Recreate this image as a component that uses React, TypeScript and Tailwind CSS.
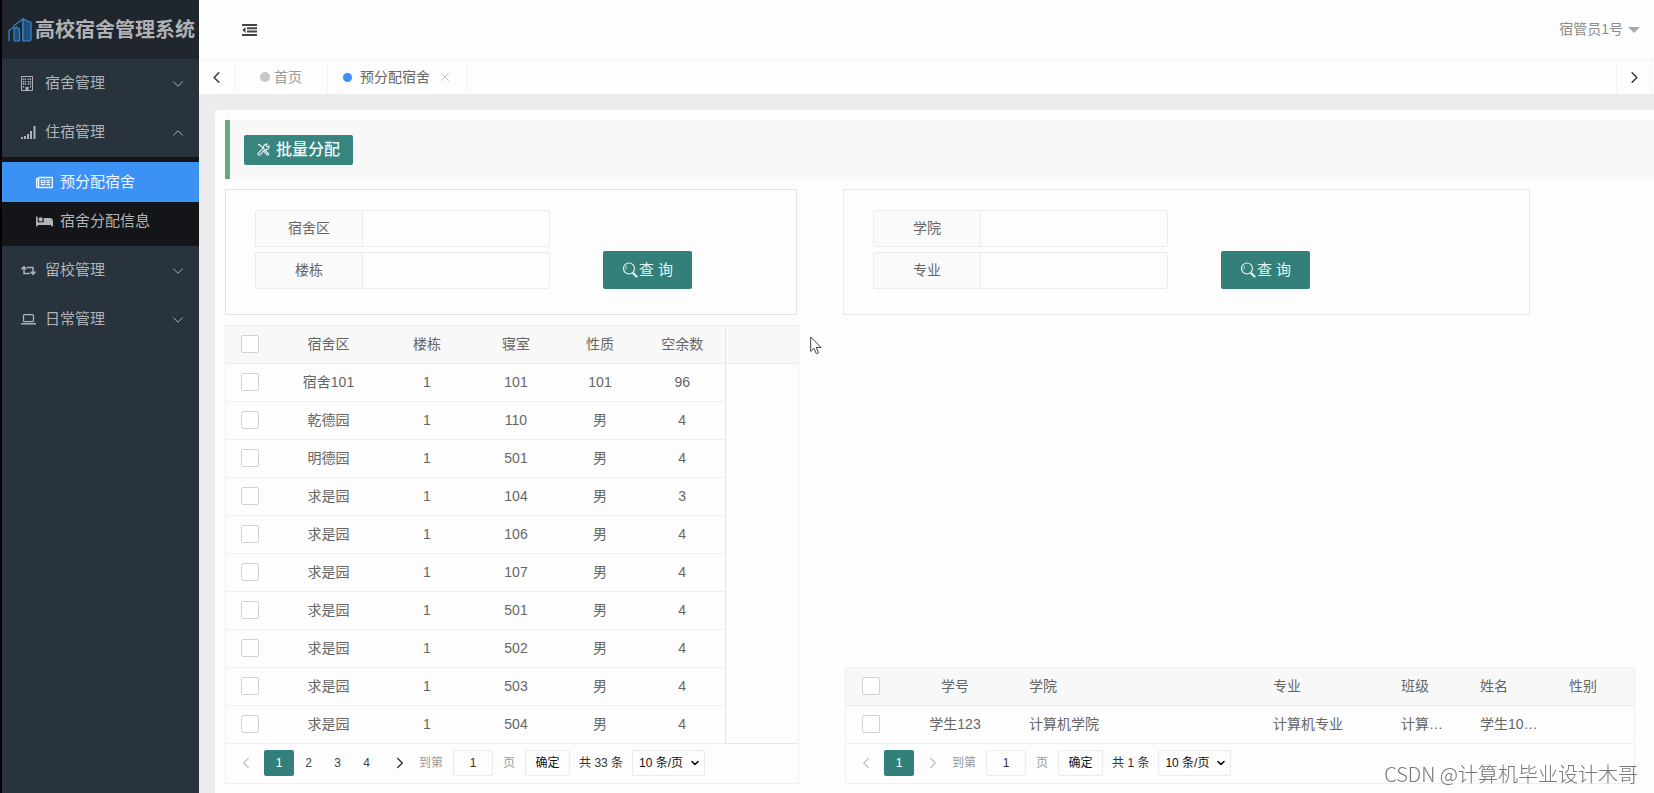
import { useState } from "react";
import { FaBed, FaRegNewspaper, FaRetweet } from "react-icons/fa";
import { ChevronDown, ChevronLeft, ChevronRight, ChevronUp, X } from "lucide-react";

type Room = [area: string, building: string, room: string, kind: string, free: string];

const rooms: Room[] = [
  ["宿舍101", "1", "101", "101", "96"],
  ["乾德园", "1", "110", "男", "4"],
  ["明德园", "1", "501", "男", "4"],
  ["求是园", "1", "104", "男", "3"],
  ["求是园", "1", "106", "男", "4"],
  ["求是园", "1", "107", "男", "4"],
  ["求是园", "1", "501", "男", "4"],
  ["求是园", "1", "502", "男", "4"],
  ["求是园", "1", "503", "男", "4"],
  ["求是园", "1", "504", "男", "4"],
];

const roomColumns = ["宿舍区", "楼栋", "寝室", "性质", "空余数"];
const studentColumns = ["学院", "专业", "班级", "姓名", "性别"];

function Logo() {
  return (
    <svg viewBox="0 0 24 24" className="h-6 w-6 shrink-0" fill="none" stroke="#3d85c6" strokeWidth="1.2">
      <path d="M1 23V12.500l5-3.500" />
      <path d="M6 23V11l2.500-2 3 2v12z" fill="#1f4f80" />
      <path d="M6 9.500V7.500l9-6.500v22" />
      <path d="M15 1l8 3.500V22l-1.500 1H15z" fill="#1f4f80" />
    </svg>
  );
}

function BuildingIcon() {
  return (
    <svg viewBox="0 0 12 15" className="h-[15px] w-3">
      <path d="M.5.5h11v14H.5z" fill="none" stroke="currentColor" />
      <path
        d="M2.500 2.500v7M4.500 2.500v7M7.500 2.500v7M9.500 2.500v7M2.500 10v2.500M9.500 10v2.500"
        stroke="currentColor"
        strokeWidth="1.300"
        strokeDasharray="1.500 0.900"
      />
      <path d="M4.500 11h3v3.500h-3z" fill="currentColor" />
    </svg>
  );
}

function SignalIcon() {
  return (
    <svg viewBox="0 0 15 13" className="h-[13px] w-[15px]" fill="currentColor">
      <path d="M0 11h2v2H0zM3 10h2v3H3zM6 8h2v5H6zM9 5h2v8H9zM12.500 0h2v13h-2z" />
    </svg>
  );
}

function LaptopIcon() {
  return (
    <svg viewBox="0 0 15 11" className="h-[11px] w-[15px]" fill="none" stroke="currentColor">
      <rect x="2.500" y=".7" width="10" height="7" rx="1" strokeWidth="1.300" />
      <path d="M0 9.800h15" strokeWidth="1.500" />
    </svg>
  );
}

function OutdentIcon() {
  return (
    <svg viewBox="0 0 15 12" className="h-3 w-[15px]" fill="currentColor">
      <path d="M0 0h15v2H0zM5 3.300h10v2H5zM5 6.600h10v2H5zM0 10h15v2H0zM3.500 3v6L.3 6z" />
    </svg>
  );
}

function ToolsIcon() {
  return (
    <svg viewBox="0 0 14 14" className="h-[13px] w-[13px]" fill="none" stroke="currentColor" strokeWidth="1.200">
      <path d="M1 1.500l2 .5 4 4M8.500 8l3.800 3.300a1 1 0 0 1-1.600 1.500L7.500 9.200z" />
      <path d="M12.800 3.200l-1.700 1-1.300-1.300 1-1.700a3 3 0 0 0-3.500 3.900L1.500 10.600a1.400 1.400 0 0 0 2 2l5.300-5.700a3 3 0 0 0 4-3.700z" />
    </svg>
  );
}

function SearchIcon() {
  return (
    <svg viewBox="0 0 16 16" className="h-4 w-4" fill="none" stroke="currentColor">
      <circle cx="7" cy="6.500" r="5.500" strokeWidth="1.200" />
      <path d="M4 7.500a3.500 3.500 0 0 1 1-3.600" strokeWidth="0.800" />
      <path d="M11.500 11.500l3 3" strokeWidth="2.200" strokeLinecap="round" />
    </svg>
  );
}

function MenuItem({ icon, label, open }: { icon: React.ReactNode; label: string; open?: boolean }) {
  return (
    <button
      type="button"
      aria-expanded={!!open}
      className="flex h-[49px] w-full items-center pr-[12px] pl-[19px] text-[15px] text-[#b0b3b7]"
    >
      <span className="flex w-6 items-center text-[15px]">{icon}</span>
      <span className="flex-1 text-left">{label}</span>
      {open ? <ChevronUp size={18} strokeWidth={1.3} /> : <ChevronDown size={18} strokeWidth={1.3} />}
    </button>
  );
}

function Sidebar() {
  return (
    <aside className="w-[199px] shrink-0 border-l-2 border-black bg-[#28333e]">
      <div className="flex h-[59px] items-center gap-[3px] bg-[#20262e] pl-[6px] text-[20px] font-bold whitespace-nowrap text-[#b0b1b4]">
        <Logo />
        <h1>高校宿舍管理系统</h1>
      </div>
      <nav>
        <MenuItem icon={<BuildingIcon />} label="宿舍管理" />
        <MenuItem icon={<SignalIcon />} label="住宿管理" open />
        <div className="bg-[#131518] py-[5px] text-[15px]">
          <a href="#preassign" className="flex h-[40px] items-center gap-[7px] bg-[#3b91f4] pl-[34px] text-[#eef5fd]">
            <FaRegNewspaper size={17} />
            预分配宿舍
          </a>
          <a href="#assigned" className="flex h-[39px] items-center gap-[7px] pl-[34px] text-[#b0b3b7]">
            <FaBed size={17} />
            宿舍分配信息
          </a>
        </div>
        <MenuItem icon={<FaRetweet />} label="留校管理" />
        <MenuItem icon={<LaptopIcon />} label="日常管理" />
      </nav>
    </aside>
  );
}

function TopBar() {
  return (
    <header className="flex h-[59px] items-center justify-between bg-[#fdfdfd] pr-[14px] pl-[43px]">
      <button type="button" aria-label="收起菜单" className="text-[#444]">
        <OutdentIcon />
      </button>
      <button type="button" className="flex items-center gap-[5px] text-[14px] text-[#8c8c8c]">
        宿管员1号
        <span className="border-x-[6px] border-t-[6px] border-x-transparent border-t-[#a8a8a8]" />
      </button>
    </header>
  );
}

function TabBar() {
  return (
    <div className="flex h-[35px] border-t border-[#f4f4f4] bg-[#fdfdfd] text-[14px]">
      <button
        type="button"
        aria-label="向左"
        className="flex w-[36px] items-center justify-center border-r border-[#f4f4f4] text-[#333]"
      >
        <ChevronLeft size={19} strokeWidth={1.8} />
      </button>
      <a href="#home" className="flex w-[93px] items-center gap-1 border-r border-[#f4f4f4] pl-[25px] text-[#9a9a9a]">
        <span className="h-[10px] w-[10px] rounded-full bg-[#c6c6c6]" />
        首页
      </a>
      <div className="flex w-[139px] items-center border-r border-[#f4f4f4] pl-[15px] text-[#666]">
        <span className="mr-2 h-[9px] w-[9px] rounded-full bg-[#3b91f4]" />
        <a href="#preassign">预分配宿舍</a>
        <button type="button" aria-label="关闭" className="ml-2 text-[#bbb]">
          <X size={14} strokeWidth={1.5} />
        </button>
      </div>
      <button
        type="button"
        aria-label="向右"
        className="mr-[2px] ml-auto flex w-[36px] items-center justify-center border-x border-[#f4f4f4] text-[#333]"
      >
        <ChevronRight size={19} strokeWidth={1.8} />
      </button>
    </div>
  );
}

function Field({ id, label }: { id: string; label: string }) {
  return (
    <div className="flex h-[37px] w-[295px] rounded-[2px] border border-[#ececec]">
      <label
        htmlFor={id}
        className="flex w-[107px] items-center justify-center border-r border-[#ececec] bg-[#fafafa]"
      >
        {label}
      </label>
      <input id={id} type="text" className="min-w-0 flex-1 px-2 outline-none" />
    </div>
  );
}

function SearchForm({ prefix, labels, className }: { prefix: string; labels: string[]; className: string }) {
  return (
    <form
      onSubmit={(e) => e.preventDefault()}
      className={`flex h-[126px] items-start border pt-5 pl-[29px] ${className}`}
    >
      <div className="flex flex-col gap-[5px]">
        {labels.map((label, i) => (
          <Field key={label} id={`${prefix}-${i}`} label={label} />
        ))}
      </div>
      <button
        type="submit"
        className="mt-[41px] ml-[53px] flex h-[38px] w-[89px] items-center justify-center gap-px rounded-[2px] bg-[#33807b] text-[15px] text-[#e8f2f1]"
      >
        <SearchIcon />查 询
      </button>
    </form>
  );
}

function CheckBox({ label }: { label: string }) {
  return (
    <input
      type="checkbox"
      aria-label={label}
      className="block h-[18px] w-[18px] appearance-none rounded-[2px] border border-[#d2d2d2] bg-white checked:bg-[#33807b]"
    />
  );
}

function Pager({ pages, total }: { pages: number; total: number }) {
  const [page, setPage] = useState(1);
  const last = page === pages;

  return (
    <div className="flex h-[39px] items-center pl-[11px] text-[12px] whitespace-nowrap text-[#333]">
      <button type="button" aria-label="上一页" className="w-[18px] text-[#c4c4c4]">
        <ChevronLeft size={18} strokeWidth={1.8} />
      </button>
      <div className="ml-[9px] flex">
        {Array.from({ length: pages }, (_, i) => i + 1).map((n) => (
          <button
            key={n}
            type="button"
            onClick={() => setPage(n)}
            className={`h-[26px] rounded-[2px] ${n === page ? "w-[30px] bg-[#33807b] text-white" : "w-[29px] text-[#444]"}`}
          >
            {n}
          </button>
        ))}
      </div>
      <button
        type="button"
        aria-label="下一页"
        className={`ml-[10px] w-[18px] ${last ? "text-[#c4c4c4]" : "text-[#333]"}`}
      >
        <ChevronRight size={18} strokeWidth={1.8} />
      </button>
      <label className="ml-[10px] flex items-center gap-[10px] text-[#999]">
        到第
        <input
          type="text"
          defaultValue="1"
          className="h-[26px] w-[40px] rounded-[2px] border border-[#eaeaea] text-center text-[#333] outline-none"
        />
        页
      </label>
      <button type="button" className="ml-[10px] h-[26px] w-[45px] rounded-[2px] border border-[#eaeaea] text-[#111]">
        确定
      </button>
      <span className="ml-[9px]">共 {total} 条</span>
      <span className="relative ml-[9px]">
        <select
          aria-label="每页条数"
          className="h-[26px] w-[73px] appearance-none rounded-[2px] border border-[#eaeaea] pl-[6px] text-[#111]"
        >
          <option>10 条/页</option>
          <option>20 条/页</option>
        </select>
        <ChevronDown size={12} strokeWidth={3} className="pointer-events-none absolute top-[7px] right-[4px] text-black" />
      </span>
    </div>
  );
}

function RoomTable() {
  return (
    <div className="border border-[#efefef]">
      <table className="w-full table-fixed border-collapse text-center">
        <colgroup>
          <col className="w-[49px]" />
          <col className="w-[107px]" />
          <col className="w-[90px]" />
          <col className="w-[88px]" />
          <col className="w-[80px]" />
          <col className="w-[85px]" />
          <col />
        </colgroup>
        <thead>
          <tr className="h-[37px] border-b border-[#ececec] bg-[#f8f8f8]">
            <th className="pl-[15px]">
              <CheckBox label="全选" />
            </th>
            {roomColumns.map((c) => (
              <th key={c} className="font-normal">
                {c}
              </th>
            ))}
            <td className="border-l border-[#e6e6e6]" />
          </tr>
        </thead>
        <tbody>
          {rooms.map((room, i) => (
            <tr key={i} className="h-[38px]">
              <td className="border-b border-[#f0f0f0] pl-[15px]">
                <CheckBox label={`选择 ${room[0]} ${room[2]}`} />
              </td>
              {room.map((value, j) => (
                <td key={j} className="border-b border-[#f0f0f0]">
                  {value}
                </td>
              ))}
              {i === 0 && <td rowSpan={rooms.length} className="border-b border-l border-[#e6e6e6]" />}
            </tr>
          ))}
        </tbody>
      </table>
      <Pager pages={4} total={33} />
    </div>
  );
}

function StudentTable() {
  const values = ["计算机学院", "计算机专业", "计算机1班", "学生1001号", ""];

  return (
    <div className="mr-[19px] ml-[2px] border border-[#efefef]">
      <table className="w-full table-fixed border-collapse text-left">
        <colgroup>
          <col className="w-[50px]" />
          <col className="w-[118px]" />
          <col className="w-[244px]" />
          <col className="w-[128px]" />
          <col className="w-[79px]" />
          <col className="w-[89px]" />
          <col />
        </colgroup>
        <thead>
          <tr className="h-[37px] border-b border-[#ececec] bg-[#f8f8f8]">
            <th className="pl-[16px]">
              <CheckBox label="全选学生" />
            </th>
            <th className="text-center font-normal">学号</th>
            {studentColumns.map((c) => (
              <th key={c} className="pl-[15px] font-normal">
                {c}
              </th>
            ))}
          </tr>
        </thead>
        <tbody>
          <tr className="h-[38px] border-b border-[#f0f0f0]">
            <td className="pl-[16px]">
              <CheckBox label="选择 学生123" />
            </td>
            <td className="text-center">学生123</td>
            {values.map((value, i) => (
              <td key={i} className="truncate pr-[15px] pl-[15px]">
                {value}
              </td>
            ))}
          </tr>
        </tbody>
      </table>
      <Pager pages={1} total={1} />
    </div>
  );
}

export default function App() {
  return (
    <div className="flex min-h-screen overflow-hidden bg-[#ececec] font-['Liberation_Sans','Noto_Sans_CJK_SC',sans-serif] text-[14px] text-[#666]">
      <Sidebar />
      <div className="flex min-w-0 flex-1 flex-col">
        <TopBar />
        <TabBar />
        <main className="mt-4 ml-4 flex-1 rounded-tl-[4px] bg-[#fdfdfd] pt-[10px] pl-[10px]">
          <div className="flex h-[59px] items-center border-l-[5px] border-[#66a878] bg-[#f8f8f8] pl-[14px]">
            <button
              type="button"
              className="flex h-[30px] items-center gap-[6px] rounded-[2px] bg-[#38857f] px-[13px] text-[16px] font-medium text-[#eef6f5]"
            >
              <ToolsIcon />
              批量分配
            </button>
          </div>
          <div className="mt-[10px] grid grid-cols-[574fr_811fr] gap-x-11">
            <section className="flex flex-col gap-[10px]">
              <SearchForm prefix="room" labels={["宿舍区", "楼栋"]} className="mr-[2px] border-[#e2e2e2]" />
              <RoomTable />
            </section>
            <section className="flex flex-col justify-between">
              <SearchForm prefix="student" labels={["学院", "专业"]} className="mr-[124px] border-[#e8e8e8]" />
              <StudentTable />
            </section>
          </div>
        </main>
      </div>
      <svg viewBox="0 0 12 19" className="fixed top-[336px] left-[810px] h-[19px] w-[12px]" fill="#fff" stroke="#444">
        <path d="M.7 1v14.500l3.300-3.200 2.300 5.400 2.200-1-2.300-5.200h4.800z" />
      </svg>
      <p className="fixed right-4 bottom-1 font-['Noto_Sans_CJK_SC',sans-serif] text-[20px] leading-[30px] font-light text-[#777]">
        CSDN @计算机毕业设计木哥
      </p>
    </div>
  );
}
